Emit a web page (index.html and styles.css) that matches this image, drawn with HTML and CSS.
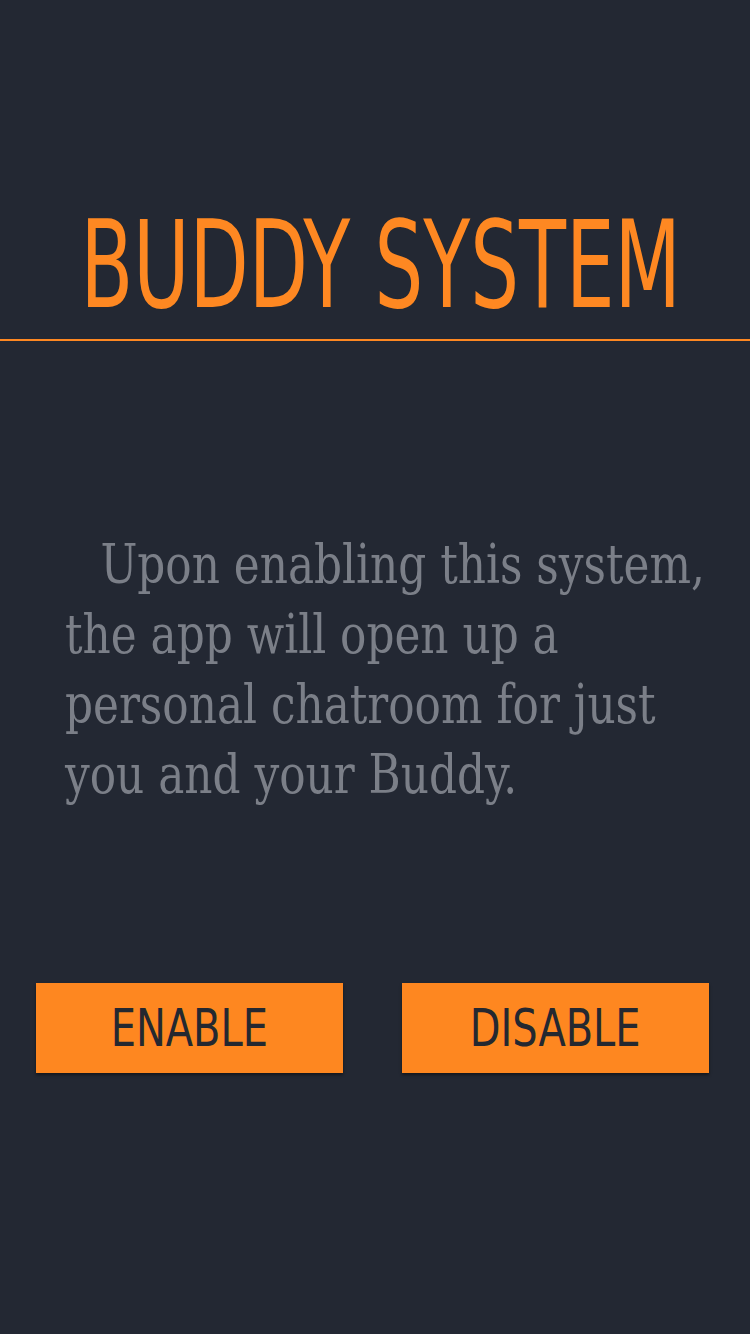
FILE: index.html
```html
<!DOCTYPE html>
<html lang="en">
<head>
<meta charset="utf-8">
<title>Buddy System</title>
<link rel="stylesheet" href="styles.css">
</head>
<body>
<div class="screen">
  <header class="header">
    <h1 class="title"><span class="title-text">BUDDY SYSTEM</span></h1>
  </header>
  <p class="desc">Upon enabling this system,<br>the app will open up a<br>personal chatroom for just<br>you and your Buddy.</p>
  <div class="actions">
    <button class="btn"><span class="btn-text">ENABLE</span></button>
    <button class="btn"><span class="btn-text">DISABLE</span></button>
  </div>
</div>
</body>
</html>
```

FILE: styles.css
```css
html, body {
  margin: 0;
  padding: 0;
  background: #232833;
}
.screen {
  width: 750px;
  height: 1334px;
  display: flex;
  flex-direction: column;
  background: #232833;
  overflow: hidden;
}
.header {
  padding-top: 204px;
  padding-bottom: 13px;
  border-bottom: 2px solid #fe8822;
}
.title {
  margin: 0;
  padding-left: 11px;
  display: flex;
  justify-content: center;
  font-family: "DejaVu Sans Condensed", "DejaVu Sans", sans-serif;
  font-stretch: condensed;
  font-weight: normal;
  font-size: 122px;
  line-height: 122px;
  color: #fe8822;
}
.title-text {
  flex: none;
  display: inline-block;
  transform: scaleX(0.70);
  white-space: nowrap;
}
.desc {
  margin: 188px 0 0 65px;
  font-family: "DejaVu Serif Condensed", "DejaVu Serif", serif;
  font-stretch: condensed;
  font-size: 55px;
  line-height: 70px;
  color: #7b7f88;
  text-indent: 40px;
  white-space: nowrap;
  transform: scaleX(0.885);
  transform-origin: left top;
}
.actions {
  margin-top: 174px;
  padding: 0 41px 0 36px;
  display: flex;
  gap: 59px;
}
.btn {
  flex: 0 0 307px;
  height: 90px;
  border: none;
  padding: 0;
  margin: 0;
  background: #fe8720;
  box-shadow: 0 2px 3px rgba(0, 0, 0, 0.45);
  display: flex;
  align-items: center;
  justify-content: center;
  font-family: "DejaVu Sans Condensed", "DejaVu Sans", sans-serif;
  font-stretch: condensed;
  font-size: 51px;
  line-height: 51px;
  color: #242830;
}
.btn-text {
  display: inline-block;
  transform: scaleX(0.87);
  white-space: nowrap;
}
```
